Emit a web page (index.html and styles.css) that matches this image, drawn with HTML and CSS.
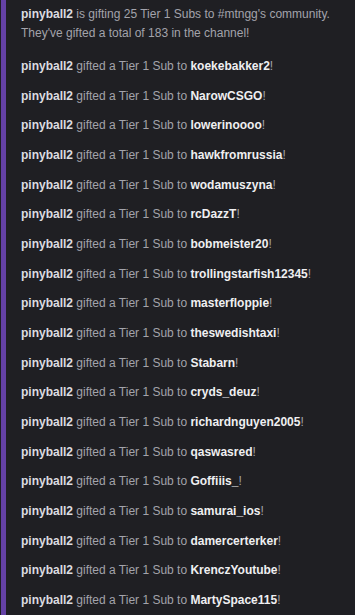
FILE: index.html
```html
<!DOCTYPE html>
<html>
<head>
  <link rel="stylesheet" href="styles.css">
</head>
<body>
  <div class="gift-feed">
    <div class="gift-line gift-line-first">
      <span class="gift-user">pinyball2</span> is gifting 25 Tier 1 Subs to #mtngg's community. They've gifted a total of 183 in the channel!
    </div>
    <div class="gift-line"><span class="gift-user">pinyball2</span> gifted a Tier 1 Sub to <span class="gift-target">koekebakker2</span>!</div>
    <div class="gift-line"><span class="gift-user">pinyball2</span> gifted a Tier 1 Sub to <span class="gift-target">NarowCSGO</span>!</div>
    <div class="gift-line"><span class="gift-user">pinyball2</span> gifted a Tier 1 Sub to <span class="gift-target">lowerinoooo</span>!</div>
    <div class="gift-line"><span class="gift-user">pinyball2</span> gifted a Tier 1 Sub to <span class="gift-target">hawkfromrussia</span>!</div>
    <div class="gift-line"><span class="gift-user">pinyball2</span> gifted a Tier 1 Sub to <span class="gift-target">wodamuszyna</span>!</div>
    <div class="gift-line"><span class="gift-user">pinyball2</span> gifted a Tier 1 Sub to <span class="gift-target">rcDazzT</span>!</div>
    <div class="gift-line"><span class="gift-user">pinyball2</span> gifted a Tier 1 Sub to <span class="gift-target">bobmeister20</span>!</div>
    <div class="gift-line"><span class="gift-user">pinyball2</span> gifted a Tier 1 Sub to <span class="gift-target">trollingstarfish12345</span>!</div>
    <div class="gift-line"><span class="gift-user">pinyball2</span> gifted a Tier 1 Sub to <span class="gift-target">masterfloppie</span>!</div>
    <div class="gift-line"><span class="gift-user">pinyball2</span> gifted a Tier 1 Sub to <span class="gift-target">theswedishtaxi</span>!</div>
    <div class="gift-line"><span class="gift-user">pinyball2</span> gifted a Tier 1 Sub to <span class="gift-target">Stabarn</span>!</div>
    <div class="gift-line"><span class="gift-user">pinyball2</span> gifted a Tier 1 Sub to <span class="gift-target">cryds_deuz</span>!</div>
    <div class="gift-line"><span class="gift-user">pinyball2</span> gifted a Tier 1 Sub to <span class="gift-target">richardnguyen2005</span>!</div>
    <div class="gift-line"><span class="gift-user">pinyball2</span> gifted a Tier 1 Sub to <span class="gift-target">qaswasred</span>!</div>
    <div class="gift-line"><span class="gift-user">pinyball2</span> gifted a Tier 1 Sub to <span class="gift-target">Goffiiis_</span>!</div>
    <div class="gift-line"><span class="gift-user">pinyball2</span> gifted a Tier 1 Sub to <span class="gift-target">samurai_ios</span>!</div>
    <div class="gift-line"><span class="gift-user">pinyball2</span> gifted a Tier 1 Sub to <span class="gift-target">damercerterker</span>!</div>
    <div class="gift-line"><span class="gift-user">pinyball2</span> gifted a Tier 1 Sub to <span class="gift-target">KrenczYoutube</span>!</div>
    <div class="gift-line"><span class="gift-user">pinyball2</span> gifted a Tier 1 Sub to <span class="gift-target">MartySpace115</span>!</div>
  </div>
</body>
</html>
```
FILE: styles.css
```css
/* Page */
body {
  margin: 0;
  background-color: #1f1f23;
  font-family: "Liberation Sans", Arial, sans-serif;
  font-size: 12px;
  overflow: hidden;
}

/* Feed with the purple sub-gift bar */
.gift-feed {
  margin-left: 1px;
  border-left: 5px solid #6441a5;
  min-height: 100vh;
}

/* One chat notice */
.gift-line {
  padding: 5px 15px;
  line-height: 19.67px;
  color: #a3a3ab;
}

.gift-line-first {
  padding-top: 5px;
  padding-bottom: 10px;
  line-height: 18.5px;
}

/* Gifter name */
.gift-user {
  font-weight: bold;
  color: #dcdce0;
}

/* Recipient name */
.gift-target {
  font-weight: bold;
  color: #efeff1;
}
```
